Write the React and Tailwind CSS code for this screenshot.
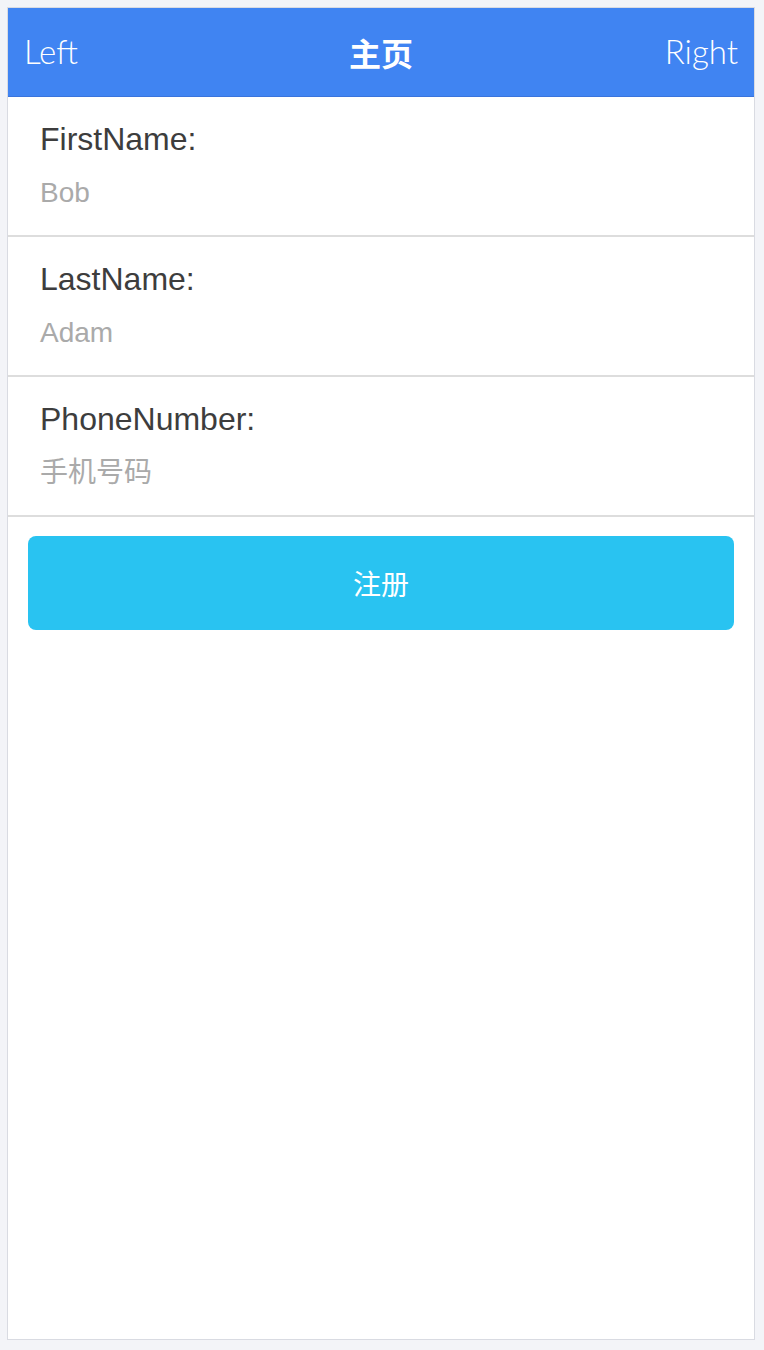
import React from 'react';

const fields = [
  { label: 'FirstName:', value: 'Bob' },
  { label: 'LastName:', value: 'Adam' },
  { label: 'PhoneNumber:', value: '手机号码' },
];

export default function App() {
  return (
    <div className="min-h-[1350px] bg-[#f3f4f8] pt-[7px] px-[7px] pb-[10px]">
      <div
        className="h-[1333px] w-[748px] border border-[#d9dbe2] bg-white flex flex-col"
        style={{ fontFamily: '"Liberation Sans", "Noto Sans CJK SC", sans-serif' }}
      >
        {/* HEADER */}
        <header className="h-[89px] bg-[#4084f2] border-b border-[#3a74dc] flex items-center justify-between px-[16px] text-white relative">
          <span className="text-[33px] font-light" style={{ fontFamily: 'Lato, Roboto, sans-serif' }}>Left</span>
          <span className="absolute left-1/2 -translate-x-1/2 text-[32px] font-bold" style={{ fontFamily: '"Noto Sans CJK SC", sans-serif' }}>主页</span>
          <span className="text-[33px] font-light" style={{ fontFamily: 'Lato, Roboto, sans-serif' }}>Right</span>
        </header>

        {/* FORM */}
        {fields.map((f) => (
          <div key={f.label} className="h-[140px] border-b-2 border-[#dddddd] pl-[32px] pt-[22px]">
            <div className="text-[32px] leading-[40px] text-[#3d3d3d]">{f.label}</div>
            <div className="mt-[14px] text-[28px] leading-[40px] text-[#aaaaaa]">{f.value}</div>
          </div>
        ))}

        <div className="px-[20px] pt-[19px]">
          <button className="w-full h-[94px] rounded-[8px] bg-[#29c3f1] text-white text-[28px]" style={{ fontFamily: '"Noto Sans CJK SC", sans-serif' }}>
            注册
          </button>
        </div>
      </div>
    </div>
  );
}
